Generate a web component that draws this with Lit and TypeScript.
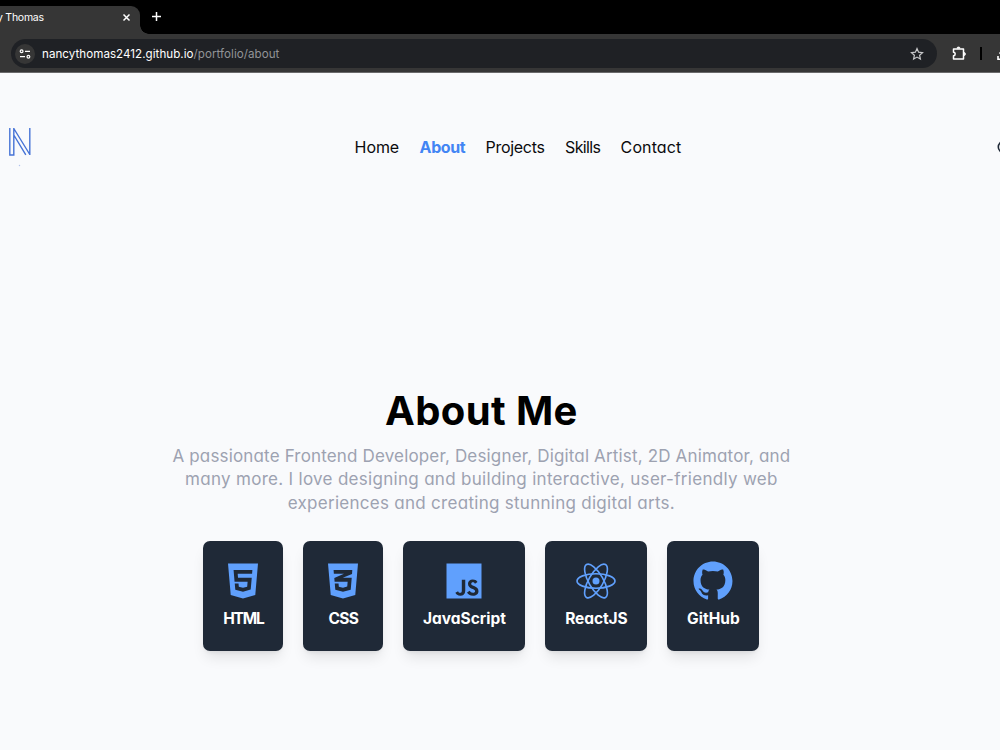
import { LitElement, html, css, svg } from "lit";
import { customElement, property } from "lit/decorators.js";

const icons = {
  html: svg`<path fill-rule="evenodd" d="M64 32l34.94 403.21L255.77 480 413 435.15 448 32zm308 132H188l4 51h176l-13.51 151.39L256 394.48l-98.68-28-6.78-77.48h48.26l3.42 39.29L256 343.07l53.42-14.92L315 264H148l-12.59-149.59H376.2z"/>`,
  css: svg`<path fill-rule="evenodd" d="M64 32l35 403.22L255.77 480 413 435.15 448 32zm290.68 334.9L256 395l-98.53-28-6.81-78h48.29l3.47 39.25 53.62 14.58 54-15 5.6-62.85h-166.92l-4-48.49 124.06-53H139.14l-3.65-48h239.42l-3.6 52-117.5 48h113.8z"/>`,
  js: svg`<path fill-rule="evenodd" d="M32 32v448h448V32zm240 348c0 43.61-25.76 64.87-63.05 64.87-33.68 0-53.23-17.44-63.15-38.49l34.28-20.75c6.61 11.73 11.63 21.65 26.06 21.65 12 0 21.86-5.41 21.86-26.46V240h44zm99.35 63.87c-39.09 0-64.35-17.64-76.68-42L329 382c9 14.74 20.75 24.56 41.5 24.56 17.41 0 27.32-7.7 27.32-19.72 0-14.43-10.43-19.54-29.68-28l-10.52-4.52c-30.38-12.92-50.52-29.16-50.52-63.45 0-31.57 24.05-54.63 61.64-54.63 26.77 0 46 8.32 59.85 32.68L396 290c-7.22-12.93-15-18-27.06-18-12.33 0-20.15 7.82-20.15 18 0 12.63 7.82 17.74 25.86 25.56l10.52 4.51c35.79 15.34 55.94 31 55.94 66.16.01 37.9-29.76 57.64-69.76 57.64z"/>`,
  react: svg`<g fill="none" stroke="currentColor" stroke-width="21"><ellipse cx="256" cy="256" rx="243" ry="93"/><ellipse cx="256" cy="256" rx="243" ry="93" transform="rotate(60 256 256)"/><ellipse cx="256" cy="256" rx="243" ry="93" transform="rotate(120 256 256)"/></g><circle cx="256" cy="256" r="45"/>`,
  github: svg`<path transform="translate(6 0) scale(20.8)" d="M12 .297c-6.63 0-12 5.373-12 12 0 5.303 3.438 9.8 8.205 11.385.6.113.82-.258.82-.577 0-.285-.01-1.04-.015-2.04-3.338.724-4.042-1.61-4.042-1.61C4.422 18.07 3.633 17.7 3.633 17.7c-1.087-.744.084-.729.084-.729 1.205.084 1.838 1.236 1.838 1.236 1.07 1.835 2.809 1.305 3.495.998.108-.776.417-1.305.76-1.605-2.665-.3-5.466-1.332-5.466-5.93 0-1.31.465-2.38 1.235-3.22-.135-.303-.54-1.523.105-3.176 0 0 1.005-.322 3.3 1.23.96-.267 1.98-.399 3-.405 1.02.006 2.04.138 3 .405 2.28-1.552 3.285-1.23 3.285-1.23.645 1.653.24 2.873.12 3.176.765.84 1.23 1.91 1.23 3.22 0 4.61-2.805 5.625-5.475 5.92.42.36.81 1.096.81 2.22 0 1.606-.015 2.896-.015 3.286 0 .315.21.69.825.57C20.565 22.092 24 17.592 24 12.297c0-6.627-5.373-12-12-12"/>`,
};

@customElement("skill-card")
class SkillCard extends LitElement {
  @property() icon = "html";
  @property() label = "";
  static styles = css`
    :host { display: flex; flex-direction: column; align-items: center; box-sizing: border-box; height: 110px; padding-top: 20px; border-radius: 7px; background: #1f2937; color: #fff; box-shadow: 0 9px 14px -3px rgba(0,0,0,.1), 0 3px 5px -3px rgba(0,0,0,.1); }
    svg { display: block; width: 40px; height: 40px; fill: currentColor; color: #60a0fd; }
    .label { line-height: 24px; margin-top: 6px; white-space: nowrap; }
  `;
  render() {
    return html`<svg viewBox="0 0 512 512">${icons[this.icon]}</svg><div class="label">${this.label}</div>`;
  }
}

@customElement("browser-chrome")
class BrowserChrome extends LitElement {
  static styles = css`
    :host { display: block; height: 73px; background: #363636; box-sizing: border-box; border-bottom: 1px solid #6a6a6b; color: #fff; font-family: Inter, sans-serif; font-feature-settings: normal; overflow: hidden; }
    svg { display: block; fill: none; stroke: currentColor; flex: none; }
    .tabs { display: flex; height: 34px; background: #000; }
    .tab { width: 140px; height: 28px; margin-top: 6px; background: #363636; border-radius: 0 9px 0 0; display: flex; align-items: center; justify-content: space-between; box-sizing: border-box; padding: 0 9px 5px 0; }
    .title { font-size: 10.5px; line-height: 16px; white-space: nowrap; margin-left: -3px; letter-spacing: -.25px; }
    .curve { width: 9px; height: 34px; background: radial-gradient(circle at 9px 0, transparent 8.5px, #363636 9px) 0 25px / 9px 9px no-repeat; }
    .plus { margin: 11px 0 0 2px; }
    .bar { display: flex; align-items: center; box-sizing: border-box; height: 38px; padding: 1px 0 0 11px; }
    .address { display: flex; flex: none; align-items: center; box-sizing: border-box; width: 926px; height: 29px; border-radius: 15px; background: #1f2125; padding: 0 13px 0 4px; }
    .info { display: flex; align-items: center; justify-content: center; width: 20px; height: 20px; border-radius: 50%; background: #363636; margin-right: 7px; }
    .url { flex: 1; font-size: 11.6px; letter-spacing: .04px; white-space: nowrap; }
    .path { color: #929497; }
    .star { color: #c7c8ca; }
    .ext { margin-left: 14px; }
    .divider { flex: none; width: 2px; height: 13px; background: #000; margin: 0 14px 0 13px; }
  `;
  render() {
    return html`
      <div class="tabs">
        <div class="tab"><span class="title">y Thomas</span>
          <svg width="9" height="9" viewBox="0 0 9 9" stroke-width="1.5"><path d="M1.5 1.5l6 6m0-6l-6 6"/></svg></div>
        <div class="curve"></div>
        <svg class="plus" width="11" height="11" viewBox="0 0 11 11" stroke-width="1.5"><path d="M5.5 1v9M1 5.5h9"/></svg>
      </div>
      <div class="bar">
        <div class="address">
          <div class="info"><svg width="12" height="12" viewBox="0 0 12 12" stroke-width="1.2"><circle cx="2.6" cy="3.3" r="1.4"/><path d="M6 3.3h5M1 8.7h5"/><circle cx="9.4" cy="8.7" r="1.4"/></svg></div>
          <div class="url">nancythomas2412.github.io<span class="path">/portfolio/about</span></div>
          <svg class="star" width="14" height="14" viewBox="0 0 14 14" stroke-width="1.2"><path d="M7 1.6l1.6 3.6 3.9.4-2.9 2.6.8 3.9L7 10.1l-3.4 2 .8-3.9-2.9-2.6 3.9-.4z"/></svg>
        </div>
        <svg class="ext" width="16" height="16" viewBox="0 0 16 16" stroke-width="1.5"><path d="M2.5 3h10v10h-10v-3.2c2.2 0 2.2-3.6 0-3.6z" stroke-linejoin="round"/><path d="M6 2.2a1.5 1.2 0 0 1 3 0zM13.2 6.5a1.2 1.5 0 0 1 0 3z" fill="currentColor" stroke-width=".8"/></svg>
        <div class="divider"></div>
        <svg width="14" height="16" viewBox="0 0 14 16" stroke-width="1.6"><path d="M2 10v3.2h10V10M3.5 6.5L7 10l3.5-3.5M7 2v8"/></svg>
      </div>`;
  }
}

@customElement("app-root")
class AppRoot extends LitElement {
  static styles = css`
    :host { display: block; width: 1000px; height: 750px; overflow: hidden; background: #f9fafc; color: #0b0b0d; font-family: Inter, sans-serif; font-feature-settings: "cv11"; }
    .header { display: flex; height: 74px; padding-top: 37px; overflow: hidden; }
    .logo { display: block; margin: 16px 0 0 8px; flex: none; }
    .nav { display: flex; gap: 20px; margin: 25px 0 0 322.6px; font-size: 16px; line-height: 24px; white-space: nowrap; }
    .nav a { display: block; }
    .home { width: 45px; letter-spacing: -.1px; }
    .about { width: 46px; color: #4285f4; font-weight: 700; letter-spacing: -.4px; }
    .projects { width: 59.5px; letter-spacing: -.3px; }
    .skills { width: 35.5px; letter-spacing: -.65px; }
    .contact { width: 62px; letter-spacing: .1px; }
    .theme { display: block; margin: 30px 0 0 314.4px; flex: none; }
    .main { width: 962.8px; padding-top: 202px; display: flex; flex-direction: column; align-items: center; }
    h1 { margin: 0; font-size: 40px; line-height: 50px; font-weight: 650; color: #000; letter-spacing: .4px; white-space: nowrap; }
    .intro { margin-top: 8.6px; font-size: 17px; line-height: 23.5px; color: #9da2b1; text-align: center; white-space: nowrap; }
    .l1, .l2, .l3 { display: block; }
    .l1 { letter-spacing: .16px; }
    .l2 { letter-spacing: .3px; }
    .l3 { letter-spacing: .28px; }
    .cards { display: flex; gap: 20px; margin-top: 25.9px; font-size: 15.5px; font-weight: 700; }
    .w1 { width: 80px; letter-spacing: -1.2px; }
    .w2 { width: 80px; letter-spacing: -.7px; }
    .w3 { width: 122px; }
    .w4 { width: 102px; letter-spacing: -.1px; }
    .w5 { width: 92px; }
  `;
  render() {
    return html`
      <browser-chrome></browser-chrome>
      <div class="header">
        <svg class="logo" width="24" height="42" viewBox="0 0 24 42" fill="none" stroke="#4673d6" stroke-width="1.4"><path d="M1.8 2v27h4V2M5.8 2.5l16 26M5.8 9l12 19.8M21.8 2v27"/><circle cx="11.5" cy="39.5" r=".3" stroke-width=".4"/></svg>
        <nav class="nav"><a class="home">Home</a><a class="about">About</a><a class="projects">Projects</a><a class="skills">Skills</a><a class="contact">Contact</a></nav>
        <svg class="theme" width="14" height="14" viewBox="0 0 14 14"><circle cx="7" cy="7" r="5.7" fill="none" stroke="#1f2937" stroke-width="1.6"/></svg>
      </div>
      <div class="main">
        <h1>About Me</h1>
        <div class="intro">
          <span class="l1">A passionate Frontend Developer, Designer, Digital Artist, 2D Animator, and</span>
          <span class="l2">many more. I love designing and building interactive, user-friendly web</span>
          <span class="l3">experiences and creating stunning digital arts.</span>
        </div>
        <div class="cards">
          <skill-card class="w1" icon="html" label="HTML"></skill-card>
          <skill-card class="w2" icon="css" label="CSS"></skill-card>
          <skill-card class="w3" icon="js" label="JavaScript"></skill-card>
          <skill-card class="w4" icon="react" label="ReactJS"></skill-card>
          <skill-card class="w5" icon="github" label="GitHub"></skill-card>
        </div>
      </div>`;
  }
}
